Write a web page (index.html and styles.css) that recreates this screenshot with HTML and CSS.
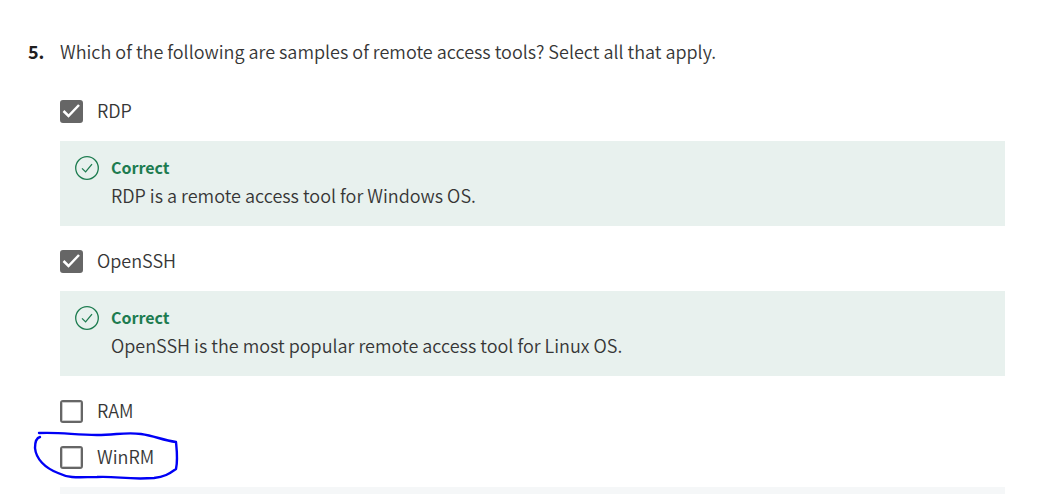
FILE: index.html
```html
<!DOCTYPE html>
<html lang="en">
<head>
<meta charset="utf-8">
<meta name="viewport" content="width=device-width, initial-scale=1">
<title>Quiz question</title>
<link rel="stylesheet" href="styles.css">
</head>
<body>
<main class="question">
  <span class="number">5.</span>
  <fieldset class="body">
    <legend class="prompt">Which of the following are samples of remote access tools? Select all that apply.</legend>

    <label class="option"><input class="check" type="checkbox" checked><span class="answer">RDP</span></label>
    <section class="feedback">
      <svg class="status" viewBox="0 0 24 24" aria-hidden="true"><circle cx="12" cy="12" r="11.3"/><path d="M7 12.4l3.600 3.500 6.400-7.800"/></svg>
      <div>
        <h2 class="verdict">Correct</h2>
        <p class="note">RDP is a remote access tool for Windows OS.</p>
      </div>
    </section>

    <label class="option"><input class="check" type="checkbox" checked><span class="answer">OpenSSH</span></label>
    <section class="feedback">
      <svg class="status" viewBox="0 0 24 24" aria-hidden="true"><circle cx="12" cy="12" r="11.3"/><path d="M7 12.4l3.600 3.500 6.400-7.800"/></svg>
      <div>
        <h2 class="verdict">Correct</h2>
        <p class="note">OpenSSH is the most popular remote access tool for Linux OS.</p>
      </div>
    </section>

    <label class="option"><input class="check" type="checkbox"><span class="answer">RAM</span></label>
    <label class="option"><input class="check" type="checkbox"><span class="answer">WinRM</span>
      <svg class="marker" viewBox="0 0 150 54" aria-hidden="true"><path d="M7 5C30 4 42 7 65 7C84 7 93 4 109 6C123 8 130 12 144 14C145 24 146 32 144 41C137 46 132 49 122 50C95 52 86 48 65 49C49 49 38 51 26 45C13 40 4 31 3 20C3 14 4 10 8 9"/></svg>
    </label>
    <div class="feedback pending"></div>
  </fieldset>
</main>
</body>
</html>
```
FILE: styles.css
```css
body {
  margin: 0;
  background: #fff;
  color: #363636;
  font-family: "Source Sans Pro", "Noto Sans CJK JP", "Noto Sans", sans-serif;
  font-size: 18px;
  font-weight: 350;
  line-height: 28px;
}

.question {
  display: grid;
  grid-template-columns: 32px 1fr;
  padding: 37px 52px 0 28px;
}

.number {
  color: #1f1f1f;
  font-weight: 700;
}

.body {
  min-width: 0;
  margin: 0;
  padding: 0;
  border: 0;
}

.prompt {
  padding: 0;
  margin-bottom: 23px;
}

.option {
  position: relative;
  display: flex;
  align-items: center;
  gap: 14px;
  width: fit-content;
  height: 46px;
}

.answer {
  padding-bottom: 2px;
}

.check {
  appearance: none;
  box-sizing: border-box;
  width: 23px;
  height: 23px;
  margin: 0;
  border: 2px solid #666;
  border-radius: 3px;
  background: #fff;
  box-shadow: inset 0 0 0 1px #ccc;
}

.check:checked {
  background: #666 url("data:image/svg+xml,%3Csvg xmlns='http://www.w3.org/2000/svg' viewBox='0 0 19 19'%3E%3Cpath d='M1.500 9l5 5L17 3' fill='none' stroke='%23fff' stroke-width='2.500'/%3E%3C/svg%3E") center / 19px 19px no-repeat;
  box-shadow: none;
}

.feedback {
  display: flex;
  gap: 12px;
  margin: 7px 0 12px;
  padding: 12px 15px 17px;
  background: #e8f1ee;
}

.status {
  flex: none;
  width: 24px;
  height: 24px;
  margin-top: 3px;
  fill: none;
  stroke: #1d7c50;
  stroke-width: 1.3;
}

.verdict {
  margin: 0;
  color: #1d7c50;
  font-size: 16px;
  font-weight: 700;
  line-height: 28px;
}

.note {
  margin: 0;
}

.pending {
  height: 7px;
  margin-bottom: 0;
  padding: 0;
  background: #f5f7f8;
}

.marker {
  position: absolute;
  top: -6px;
  left: -28px;
  width: 150px;
  height: 54px;
  fill: none;
  stroke: #0000f5;
  stroke-width: 2.4;
  stroke-linecap: round;
  stroke-linejoin: round;
  pointer-events: none;
}
```
